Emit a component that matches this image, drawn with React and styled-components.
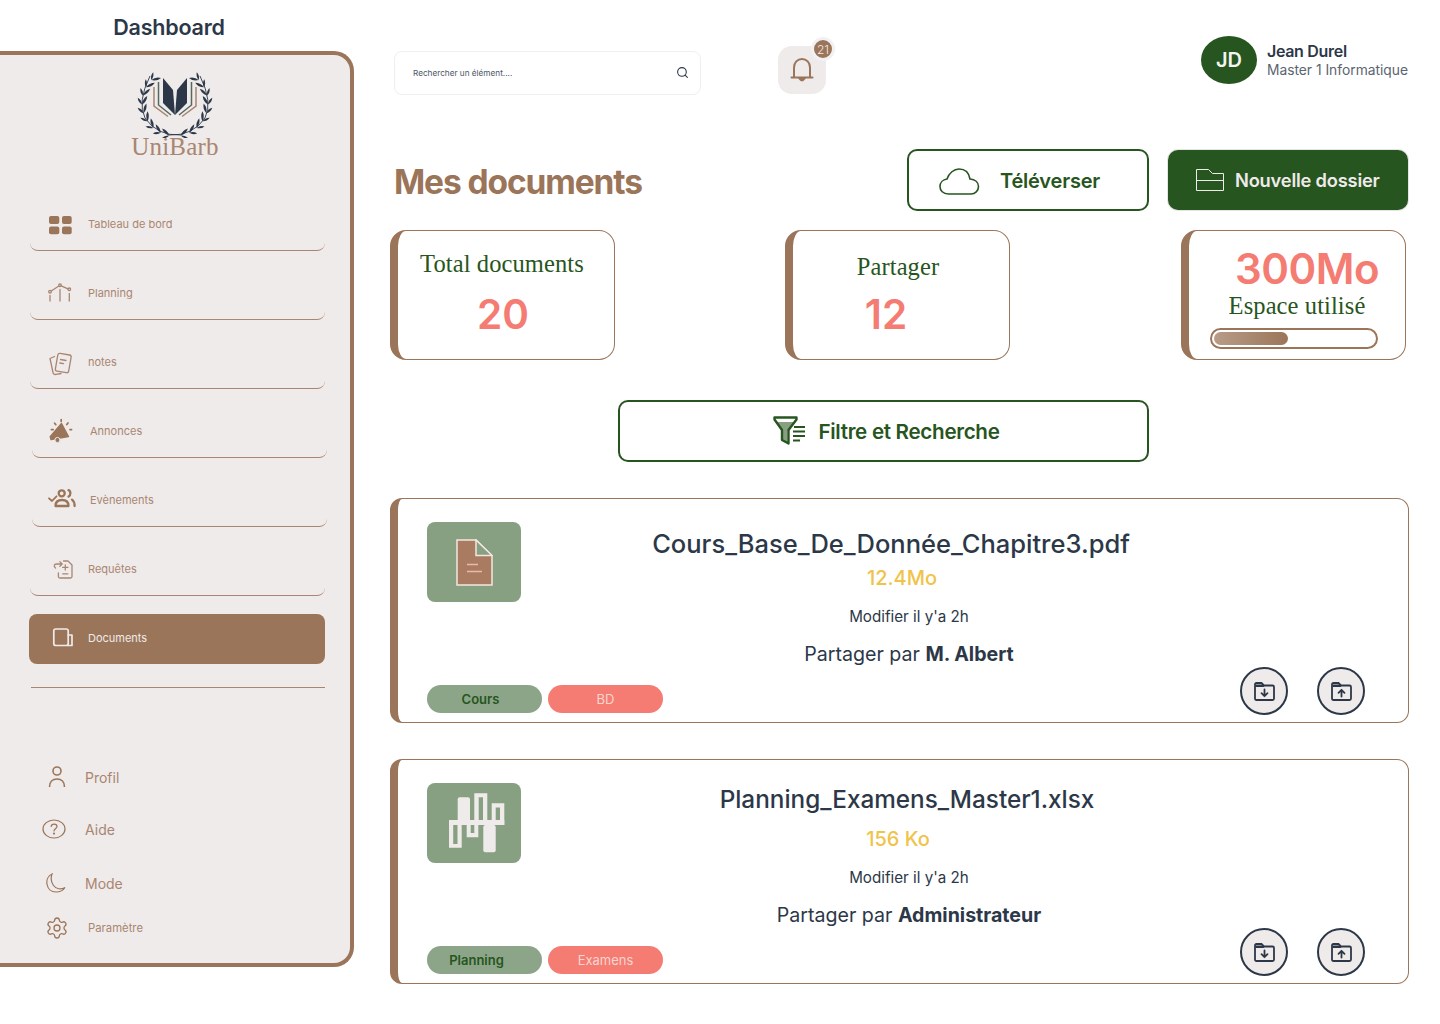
import React from "react";
import styled, { createGlobalStyle } from "styled-components";
import { Settings, Search } from "lucide-react";

const BROWN = "#9b7559";
const SOFT = "#a98671";
const PANEL = "#efebea";
const GREEN = "#275520";
const SAGE = "#87a082";
const CORAL = "#f47c72";
const DARK = "#2c3848";

const GlobalStyle = createGlobalStyle`
  * { box-sizing: border-box; }
  html, body { margin: 0; background: #ffffff; }
  body { font-family: Inter, "Noto Sans", sans-serif; color: ${DARK}; }
`;

const Page = styled.div`
  width: 1440px;
  height: 1024px;
  display: flex;
  overflow: hidden;
`;

const Aside = styled.aside`
  width: 354px;
  flex: none;
`;

const PageName = styled.div`
  height: 51px;
  padding: 2px 16px 0 0;
  display: flex;
  align-items: center;
  justify-content: center;
  font-size: 21.5px;
  font-weight: 600;
  letter-spacing: -0.2px;
`;

const Sidebar = styled.nav`
  height: 916px;
  background: ${PANEL};
  border: 4px solid ${BROWN};
  border-left: 0;
  border-radius: 0 20px 20px 0;
  padding-top: 17px;
`;

const Logo = styled.div`
  display: flex;
  flex-direction: column;
  align-items: center;
`;

const LogoName = styled.div`
  height: 20px;
  margin-top: -1px;
  font-family: "Liberation Serif", serif;
  font-size: 25px;
  line-height: 20px;
  color: ${SOFT};
  letter-spacing: 0.2px;
`;

const NavList = styled.div`
  margin-top: 25px;
`;

const NavRow = styled.div`
  width: 295px;
  height: 69px;
  margin-left: ${(p) => 30 + (p.$shift || 0)}px;
  padding: 25px 0 10px;
  display: flex;
  align-items: center;
  border-bottom: 1px solid ${SOFT};
  border-radius: 8px;
  font-size: 11px;
  color: ${SOFT};
`;

const ActiveRow = styled(NavRow)`
  width: 296px;
  height: 50px;
  margin: 18px 0 0 29px;
  padding: 0 0 2px 1px;
  border: 0;
  background: ${BROWN};
  color: ${PANEL};
`;

const IconSlot = styled.span`
  width: 58px;
  flex: none;
  display: flex;
  justify-content: center;
`;

const Divider = styled.div`
  width: 294px;
  height: 1px;
  margin: 23px 0 74px 31px;
  background: ${SOFT};
`;

const BottomRow = styled.div`
  height: 30px;
  margin-top: ${(p) => p.$mt || 0}px;
  padding-left: ${(p) => p.$left || 42}px;
  display: flex;
  align-items: center;
  gap: ${(p) => p.$gap || 19}px;
  font-size: ${(p) => p.$size || 14}px;
  color: ${SOFT};
`;

const Main = styled.main`
  width: 1019px;
  margin-left: 36px;
  padding-top: 36px;
`;

const TopBar = styled.header`
  height: 59px;
  margin-left: 4px;
  display: flex;
  align-items: flex-start;
`;

const SearchBox = styled.div`
  width: 307px;
  height: 44px;
  margin-top: 15px;
  padding: 0 11px 1px 18px;
  display: flex;
  align-items: center;
  justify-content: space-between;
  border: 1px solid #f0eeee;
  border-radius: 8px;
  font-size: 8.2px;
  color: #4b5563;
`;

const BellBox = styled.div`
  position: relative;
  width: 48px;
  height: 48px;
  margin: 10px 0 0 77px;
  display: flex;
  align-items: center;
  justify-content: center;
  background: ${PANEL};
  border-radius: 14px;
`;

const BellBadge = styled.span`
  position: absolute;
  top: -9px;
  right: -9px;
  width: 24px;
  height: 24px;
  display: flex;
  align-items: center;
  justify-content: center;
  background: ${BROWN};
  border: 3px solid #f1f0f5;
  border-radius: 50%;
  font-size: 12px;
  font-weight: 300;
  color: #f3ece8;
`;

const UserBlock = styled.div`
  margin: 0 1px 0 auto;
  display: flex;
  align-items: center;
  gap: 10px;
`;

const Avatar = styled.div`
  width: 56px;
  height: 48px;
  display: flex;
  align-items: center;
  justify-content: center;
  background: ${GREEN};
  border-radius: 50%;
  font-size: 20px;
  font-weight: 600;
  color: #f4f4f0;
`;

const UserName = styled.div`
  font-size: 16px;
  line-height: 20px;
  font-weight: 600;
  letter-spacing: -0.3px;
`;

const UserRole = styled.div`
  font-size: 13.8px;
  line-height: 18px;
  color: #5b6470;
`;

const TitleRow = styled.div`
  height: 62px;
  margin: 54px 0 0 4px;
  display: flex;
  align-items: center;
`;

const Title = styled.h1`
  margin: 3px auto 0 0;
  font-size: 33.5px;
  font-weight: 700;
  letter-spacing: -1.1px;
  color: ${BROWN};
`;

const OutlineButton = styled.div`
  width: 242px;
  height: 62px;
  padding: 2px 0 0 30px;
  display: flex;
  align-items: center;
  gap: 19px;
  border: 2px solid ${GREEN};
  border-radius: 10px;
  font-size: 20px;
  font-weight: 600;
  letter-spacing: -0.2px;
  color: ${GREEN};
`;

const SolidButton = styled.div`
  width: 240px;
  height: 60px;
  margin: 0 1px 0 19px;
  padding-left: 28px;
  display: flex;
  align-items: center;
  gap: 11px;
  background: ${GREEN};
  border-radius: 10px;
  box-shadow: 0 0 0 1px #e8e4e2;
  font-size: 18.3px;
  font-weight: 600;
  letter-spacing: -0.2px;
  color: ${PANEL};
`;

const Stats = styled.section`
  width: 1016px;
  margin-top: 19px;
  display: flex;
  justify-content: space-between;
`;

const StatCard = styled.div`
  width: 225px;
  height: 130px;
  padding-top: ${(p) => p.$top}px;
  display: flex;
  flex-direction: column;
  align-items: center;
  border: 1px solid ${BROWN};
  border-left-width: 8px;
  border-radius: 16px;
  &:nth-child(2) { margin-left: -1px; }
`;

const StatLabel = styled.div`
  margin-left: ${(p) => (p.$shift || 0) * 2}px;
  margin-top: ${(p) => p.$mt || 0}px;
  font-family: "Liberation Serif", serif;
  font-size: 24.5px;
  line-height: 28px;
  letter-spacing: 0.1px;
  color: ${GREEN};
  white-space: nowrap;
`;

const StatValue = styled.div`
  margin-left: ${(p) => (p.$shift || 0) * 2}px;
  margin-top: ${(p) => p.$mt || 0}px;
  font-size: ${(p) => p.$size || 40.5}px;
  line-height: ${(p) => p.$lh || 50}px;
  letter-spacing: ${(p) => p.$track || 0}px;
  font-weight: 600;
  color: ${CORAL};
`;

const Gauge = styled.div`
  width: 168px;
  height: 21px;
  margin: 8px 0 0 -6px;
  padding: 2px;
  border: 2px solid ${BROWN};
  border-radius: 11px;
`;

const GaugeFill = styled.div`
  height: 100%;
  background: linear-gradient(90deg, #b89c88, ${BROWN});
  border-radius: 7px;
`;

const FilterBar = styled.div`
  width: 531px;
  height: 62px;
  margin: 40px 0 0 228px;
  padding-left: 6px;
  display: flex;
  align-items: center;
  justify-content: center;
  gap: 13px;
  border: 2px solid ${GREEN};
  border-radius: 10px;
  font-size: 20.6px;
  font-weight: 600;
  letter-spacing: -0.3px;
  color: ${GREEN};
`;

const DocList = styled.section`
  margin-top: 36px;
  display: flex;
  flex-direction: column;
  gap: 36px;
`;

const DocCard = styled.article`
  height: 225px;
  display: flex;
  border: 1px solid ${BROWN};
  border-left-width: 8px;
  border-radius: 12px;
`;

const DocLeft = styled.div`
  width: 236px;
  margin-left: 29px;
  flex: none;
  padding: 23px 0 9px;
  display: flex;
  flex-direction: column;
  justify-content: space-between;
`;

const Thumb = styled.div`
  width: 94px;
  height: 80px;
  display: flex;
  align-items: center;
  justify-content: center;
  background: ${SAGE};
  border-radius: 8px;
`;

const Tags = styled.div`
  display: flex;
  gap: 6px;
`;

const Tag = styled.span`
  width: 115px;
  height: 28px;
  padding-right: ${(p) => p.$pad || 0}px;
  display: flex;
  align-items: center;
  justify-content: center;
  border-radius: 14px;
  font-size: 13px;
  font-weight: ${(p) => (p.$coral ? 400 : 600)};
  background: ${(p) => (p.$coral ? CORAL : "#8ca588")};
  color: ${(p) => (p.$coral ? "#f9d5d0" : GREEN)};
`;

const DocRight = styled.div`
  flex: 1;
  padding-bottom: 7px;
  display: flex;
  flex-direction: column;
  justify-content: space-between;
`;

const DocInfo = styled.div`
  width: 492px;
  padding-top: 28px;
  text-align: center;
  white-space: nowrap;
`;

const DocName = styled.div`
  margin: ${(p) => p.$mt}px 0 ${(p) => p.$mb}px ${(p) => p.$shift * 2}px;
  font-size: ${(p) => p.$size}px;
  line-height: 32px;
  font-weight: 500;
`;

const DocSize = styled.div`
  margin-left: ${(p) => p.$shift * 2}px;
  font-size: 20px;
  line-height: 24px;
  font-weight: 500;
  color: #f0c34a;
`;

const DocDate = styled.div`
  margin-top: 17px;
  font-size: 15.2px;
  line-height: 20px;
`;

const DocOwner = styled.div`
  margin-top: 14px;
  font-size: 19.6px;
  line-height: 26px;
  b { font-weight: 700; }
`;

const Actions = styled.div`
  padding-right: 43px;
  display: flex;
  justify-content: flex-end;
  gap: 29px;
`;

const ActionButton = styled.div`
  width: 48px;
  height: 48px;
  display: flex;
  align-items: center;
  justify-content: center;
  background: ${PANEL};
  border: 2px solid ${DARK};
  border-radius: 50%;
`;

const leafAngles = Array.from({ length: 9 }, (_, i) => 100 + i * 15.5);
const LEAF_OUT = "M0 0Q5-2.6 10 0Q5 2.6 0 0Z";
const LEAF_IN = "M0 0Q4-2.2 8 0Q4 2.2 0 0Z";

const LaurelBranch = () => (
  <g fill={DARK}>
    <path
      d="M46 63 Q22 64 10 46 Q2 30 15 4"
      fill="none"
      stroke={DARK}
      strokeWidth="0.9"
    />
    {leafAngles.map((a) => {
      const rad = (a * Math.PI) / 180;
      const x = 40 + 33 * Math.cos(rad);
      const y = 31 + 33 * Math.sin(rad);
      return (
        <g key={a}>
          <path d={LEAF_OUT} transform={`translate(${x} ${y}) rotate(${a + 90 + 34})`} />
          <path d={LEAF_IN} transform={`translate(${x} ${y}) rotate(${a + 90 - 30})`} />
        </g>
      );
    })}
  </g>
);

const BookHalf = () => (
  <>
    <path d="M28 6 38 18 40 43 28 31Z" fill={DARK} />
    <path d="M23.5 10V33L36 43" fill="none" stroke="#56695f" strokeWidth="1.5" />
    <path d="M19 15V34L33 44.5" fill="none" stroke={SOFT} strokeWidth="1.5" />
  </>
);

const LogoMark = () => (
  <svg width="80" height="66" viewBox="0 0 80 66">
    <LaurelBranch />
    <BookHalf />
    <g transform="translate(80 0) scale(-1 1)">
      <LaurelBranch />
      <BookHalf />
    </g>
  </svg>
);

const NavIcon = ({ children, color = SOFT }) => (
  <svg
    width="28"
    height="28"
    viewBox="0 0 28 28"
    fill="none"
    stroke={color}
    strokeWidth="1.3"
    strokeLinecap="round"
    strokeLinejoin="round"
    style={{ overflow: "visible" }}
  >
    {children}
  </svg>
);

const navItems = [
  {
    label: "Tableau de bord",
    icon: (
      <g fill={BROWN} stroke="none">
        <rect x="4" y="6" width="10.3" height="8" rx="2" />
        <rect x="17" y="6" width="9.7" height="8" rx="2" />
        <rect x="4" y="16.6" width="10.3" height="7.6" rx="2" />
        <rect x="17" y="16.6" width="9.7" height="7.6" rx="2" />
      </g>
    ),
  },
  {
    label: "Planning",
    icon: (
      <>
        <circle cx="5" cy="12.7" r="1.3" />
        <circle cx="15" cy="6.3" r="1.3" />
        <circle cx="24.3" cy="10.3" r="1.3" />
        <path d="M6.2 12 13.9 7M16.2 6.8 23 9.8M5 16.5V22M15 10.5V22M24.3 14.5V22" />
      </>
    ),
  },
  {
    label: "notes",
    icon: (
      <>
        <rect x="11.5" y="6" width="13.5" height="18" rx="2" transform="rotate(10 18 15)" />
        <path d="M15.5 11.5 21 12.5M14.8 15 18.5 15.7" />
        <path d="M9.5 8.5 5 10.5 8 24.5Q8.6 27 11 26.4L16 25.5" />
      </>
    ),
  },
  {
    label: "Annonces",
    shift: 2,
    icon: (
      <>
        <path
          d="M14.5 6.5 21.5 19.5 4 22.5 3.2 19.6Z"
          fill={BROWN}
          stroke={BROWN}
          strokeWidth="1.4"
        />
        <circle cx="10.5" cy="23" r="2.6" fill={BROWN} stroke={PANEL} strokeWidth="1" />
        <path
          d="M14.2 2.5V4.4M7.6 6.2 8.8 7.6M21 6 19.8 7.6M4.4 12.6H6.2M23 12.6H24.6"
          stroke={BROWN}
          strokeWidth="1.7"
        />
      </>
    ),
  },
  {
    label: "Evènements",
    shift: 2,
    icon: (
      <g stroke={BROWN} strokeWidth="2.3">
        <circle cx="14.7" cy="7.3" r="3" />
        <path d="M8.5 20C8.5 16 11 14 15 14S21.5 16 21.5 20Z" />
        <path d="M21.5 4.2C24 5 24 9.4 21.5 10.6M25 13.6C27 15 27.6 17.6 27.6 20" />
        <path d="M2 12.3 5 15 9.5 10.3" strokeWidth="1.8" />
      </g>
    ),
  },
  {
    label: "Requêtes",
    icon: (
      <>
        <path d="M18.5 6H23L27 10V21.5Q27 23 25.5 23H15Q13.4 23 13.4 21.5V18" />
        <path d="M20.3 9.8V15M17.7 12.4H22.9M17.7 18.8H22.9" />
        <path d="M10.5 13C8.5 11.5 9 9 11.5 9H17M14.8 6.6 17.2 9 14.8 11.4" />
      </>
    ),
  },
];

const FolderAction = ({ up }) => (
  <svg width="21" height="19" viewBox="0 0 21 19" fill="none">
    <path
      d="M1 2.5Q1 1 2.5 1H7.5L10 3.5H18.5Q20 3.5 20 5V16.5Q20 18 18.5 18H2.5Q1 18 1 16.5Z"
      stroke={DARK}
      strokeWidth="1.8"
    />
    <path d="M1.5 2.5H8.5L10.5 5H1.5Z" fill={DARK} />
    <path
      d={up ? "M10.5 14.5V8M7.5 10.8 10.5 7.8 13.5 10.8" : "M10.5 7.5V14M7.5 11.2 10.5 14.2 13.5 11.2"}
      stroke={DARK}
      strokeWidth="1.8"
      strokeLinecap="round"
      strokeLinejoin="round"
    />
  </svg>
);

const PdfIcon = () => (
  <svg width="37" height="47" viewBox="0 0 37 47">
    <path
      d="M1 1H20L36 16.5V46H1Z"
      fill="#a97c62"
      stroke="#f4e6df"
      strokeWidth="1.5"
    />
    <path d="M20 1V16.5H36Z" fill={SAGE} stroke="#f4e6df" strokeWidth="1.5" />
    <path d="M11 25.5H22M11 32.5H26" stroke="#f2b5aa" strokeWidth="1.5" />
  </svg>
);

const SheetIcon = () => (
  <svg width="94" height="80" viewBox="0 0 94 80" fill={PANEL} fillRule="evenodd">
    <path d="M22 37H77.3V42H22Z" />
    <path d="M22 37H34.7V64.7H22ZM26.2 42V61H30.5V42Z" />
    <rect x="30.7" y="14.3" width="12.3" height="27.7" rx="2" />
    <path d="M39.7 42H51.3V54.3H39.7ZM43.7 42V50H47.3V42Z" />
    <path d="M47.3 10.3H60.3V42H47.3ZM51.7 14.3V37H56V14.3Z" />
    <rect x="56.3" y="42" width="12.4" height="27.3" rx="2" />
    <path d="M64.7 20.3H77.3V42H64.7ZM68.7 24.6V37H73V24.6Z" />
  </svg>
);

const docs = [
  {
    name: "Cours_Base_De_Donnée_Chapitre3.pdf",
    size: "12.4Mo",
    owner: "M. Albert",
    nameBox: { $mt: 1, $mb: 6, $shift: -18, $size: 25.5 },
    sizeShift: -7,
    thumb: <PdfIcon />,
    tags: [
      { text: "Cours", pad: 8 },
      { text: "BD", coral: true },
    ],
  },
  {
    name: "Planning_Examens_Master1.xlsx",
    size: "156 Ko",
    owner: "Administrateur",
    nameBox: { $mt: -5, $mb: 12, $shift: -2, $size: 24.3 },
    sizeShift: -11,
    thumb: <SheetIcon />,
    tags: [
      { text: "Planning", pad: 16 },
      { text: "Examens", coral: true },
    ],
  },
];

const App = () => {
  return (
    <Page>
      <GlobalStyle />
      <Aside>
        <PageName>Dashboard</PageName>
        <Sidebar>
          <Logo>
            <LogoMark />
            <LogoName>UniBarb</LogoName>
          </Logo>
          <NavList>
            {navItems.map((item) => (
              <NavRow key={item.label} $shift={item.shift}>
                <IconSlot>
                  <NavIcon>{item.icon}</NavIcon>
                </IconSlot>
                {item.label}
              </NavRow>
            ))}
            <ActiveRow>
              <IconSlot>
                <NavIcon color={PANEL}>
                  <rect x="8.8" y="5" width="14.4" height="16.5" rx="2" strokeWidth="1.7" />
                  <path d="M23.2 11H27V21.5H23.2" strokeWidth="1.7" />
                </NavIcon>
              </IconSlot>
              Documents
            </ActiveRow>
          </NavList>
          <Divider />
          <BottomRow>
            <svg width="24" height="22" viewBox="0 0 24 22" fill="none" stroke={BROWN} strokeWidth="1.6">
              <circle cx="15" cy="5" r="4" />
              <path d="M7.5 21C7.5 16 10.5 13 15 13S22.5 16 22.5 21" />
            </svg>
            Profil
          </BottomRow>
          <BottomRow $mt={22}>
            <svg width="24" height="20" viewBox="0 0 24 20" fill="none" stroke={BROWN} strokeWidth="1.2">
              <ellipse cx="12" cy="10" rx="11" ry="9" />
              <path d="M9.2 7.5C9.5 4.4 15 4.4 15 7.6 15 9.8 12 9.8 12 12" strokeLinecap="round" />
              <circle cx="12" cy="14.6" r="0.5" />
            </svg>
            Aide
          </BottomRow>
          <BottomRow $mt={24}>
            <svg width="24" height="20" viewBox="0 0 24 20" fill="none" stroke={BROWN} strokeWidth="1.2">
              <path d="M10 1C1.5 5 4 19 14 19 18 19 21.5 17 23 14.5 19 17 14 16 11.5 12.5 9 9 8.5 5 10 1Z" />
            </svg>
            Mode
          </BottomRow>
          <BottomRow $mt={15} $size={11.3} $left={45} $gap={19}>
            <Settings size={24} color={BROWN} strokeWidth={1.3} />
            Paramètre
          </BottomRow>
        </Sidebar>
      </Aside>

      <Main>
        <TopBar>
          <SearchBox>
            Rechercher un élément....
            <Search size={13} color={DARK} strokeWidth={2} />
          </SearchBox>
          <BellBox>
            <svg width="24" height="26" viewBox="0 0 24 26" fill="none" stroke={BROWN} strokeWidth="2">
              <path d="M4 20V10.5C4 5.5 7.5 2 12 2S20 5.5 20 10.5V20" />
              <path d="M1.5 20.5H22.5" strokeLinecap="round" />
              <path d="M9.5 21.5Q12 25.5 14.5 21.5Z" fill={BROWN} />
            </svg>
            <BellBadge>21</BellBadge>
          </BellBox>
          <UserBlock>
            <Avatar>JD</Avatar>
            <div>
              <UserName>Jean Durel</UserName>
              <UserRole>Master 1 Informatique</UserRole>
            </div>
          </UserBlock>
        </TopBar>

        <TitleRow>
          <Title>Mes documents</Title>
          <OutlineButton>
            <svg width="42" height="27" viewBox="0 0 42 27" fill="none" stroke={GREEN} strokeWidth="1.6">
              <path d="M9.5 26C4 26 1 22.5 1 18.5 1 14.5 4 11.5 8 11 10 5 15 1 20 1 26 1 30 5 31 11 36 11.5 39.5 14.5 39.5 18.5 39.5 23 36 26 32 26Z" />
            </svg>
            Téléverser
          </OutlineButton>
          <SolidButton>
            <svg width="28" height="22" viewBox="0 0 28 22" fill="none" stroke={PANEL} strokeWidth="1">
              <path d="M.5 21.5V.5H12.5L16.5 4.5H27.5V21.5ZM.5 11.5H27.5" />
            </svg>
            Nouvelle dossier
          </SolidButton>
        </TitleRow>

        <Stats>
          <StatCard $top={19}>
            <StatLabel $shift={-4}>Total documents</StatLabel>
            <StatValue $shift={-3} $mt={12}>20</StatValue>
          </StatCard>
          <StatCard $top={22}>
            <StatLabel $shift={-3}>Partager</StatLabel>
            <StatValue $shift={-15} $mt={9}>12</StatValue>
          </StatCard>
          <StatCard $top={16}>
            <StatValue $shift={10} $size={42} $lh={44} $track={-0.5}>300Mo</StatValue>
            <StatLabel $mt={1}>Espace utilisé</StatLabel>
            <Gauge>
              <GaugeFill style={{ width: "46%" }} />
            </Gauge>
          </StatCard>
        </Stats>

        <FilterBar>
          <svg width="32" height="30" viewBox="0 0 32 30" fill="none">
            <path d="M3 6H21.5L14.5 15V26.5L9.5 24V15Z" fill={SAGE} />
            <path
              d="M1.5 1.5H23.5V3.5L15.5 14V27.5L9 24V14L1.5 3.5Z"
              stroke={GREEN}
              strokeWidth="2.4"
              strokeLinejoin="round"
            />
            <path d="M21 11H32M20 15.5H32M20 20H32M20 24.5H27" stroke={GREEN} strokeWidth="2" />
          </svg>
          Filtre et Recherche
        </FilterBar>

        <DocList>
          {docs.map((doc) => (
            <DocCard key={doc.name}>
              <DocLeft>
                <Thumb>{doc.thumb}</Thumb>
                <Tags>
                  {doc.tags.map((tag) => (
                    <Tag key={tag.text} $coral={tag.coral} $pad={tag.pad}>
                      {tag.text}
                    </Tag>
                  ))}
                </Tags>
              </DocLeft>
              <DocRight>
                <DocInfo>
                  <DocName {...doc.nameBox}>{doc.name}</DocName>
                  <DocSize $shift={doc.sizeShift}>{doc.size}</DocSize>
                  <DocDate>Modifier il y'a 2h</DocDate>
                  <DocOwner>
                    Partager par <b>{doc.owner}</b>
                  </DocOwner>
                </DocInfo>
                <Actions>
                  <ActionButton>
                    <FolderAction />
                  </ActionButton>
                  <ActionButton>
                    <FolderAction up />
                  </ActionButton>
                </Actions>
              </DocRight>
            </DocCard>
          ))}
        </DocList>
      </Main>
    </Page>
  );
};

export default App;
